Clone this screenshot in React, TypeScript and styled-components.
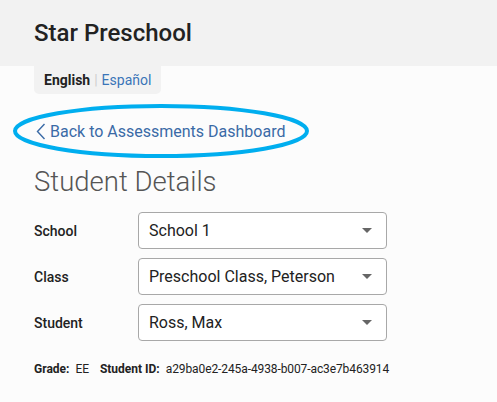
import * as React from 'react';
import styled, {createGlobalStyle} from 'styled-components';

const fields = [
    {label: 'School', value: 'School 1'},
    {label: 'Class', value: 'Preschool Class, Peterson'},
    {label: 'Student', value: 'Ross, Max'},
];

export default function App() {
    return (
        <>
            <GlobalStyle/>
            <Header>
                <Title>Star Preschool</Title>
            </Header>
            <LangTab>
                <LangCurrent>English</LangCurrent>
                <LangSep>|</LangSep>
                <LangLink href='#'>Español</LangLink>
            </LangTab>
            <Main>
                <BackWrap>
                    <BackLink href='#'>
                        <svg width='10' height='17' viewBox='0 0 10 17'>
                            <path d='M8.5 1 L1.5 8.5 L8.5 16' fill='none' stroke='currentColor' strokeWidth='1.4'/>
                        </svg>
                        Back to Assessments Dashboard
                    </BackLink>
                    <Highlight width='298' height='56' viewBox='0 0 298 56'>
                        <ellipse cx='149' cy='28' rx='146' ry='25' fill='none' stroke='#00aeef' strokeWidth='4'/>
                    </Highlight>
                </BackWrap>
                <Heading>Student Details</Heading>
                <Fields>
                    {fields.map(f => (
                        <Row key={f.label}>
                            <Label>{f.label}</Label>
                            <Select>
                                <span>{f.value}</span>
                                <Caret/>
                            </Select>
                        </Row>
                    ))}
                </Fields>
                <Meta>
                    <MetaKey>Grade:</MetaKey>
                    <MetaValue>EE</MetaValue>
                    <MetaKey>Student ID:</MetaKey>
                    <MetaValue>a29ba0e2-245a-4938-b007-ac3e7b463914</MetaValue>
                </Meta>
            </Main>
        </>
    );
}

const GlobalStyle = createGlobalStyle`
  body {
    margin: 0;
    background: #fcfcfc;
    font-family: Roboto, "Liberation Sans", sans-serif;
    color: #212121;
  }
`;

const Header = styled.header`
  height: 66px;
  background: #f2f2f2;
  display: flex;
  align-items: center;
  padding: 0 34px;
`;

const Title = styled.h1`
  margin: 0;
  font-size: 24px;
  font-weight: 500;
  color: #222;
`;

const LangTab = styled.div`
  margin-left: 34px;
  display: inline-flex;
  align-items: center;
  height: 28px;
  padding: 0 10px;
  background: #f2f2f2;
  border-radius: 0 0 5px 5px;
  font-size: 14px;
`;

const LangCurrent = styled.span`
  font-weight: 700;
  color: #222;
`;

const LangSep = styled.span`
  color: #cfcfcf;
  margin: 0 4px;
`;

const LangLink = styled.a`
  color: #3a75b8;
  text-decoration: none;
`;

const Main = styled.main`
  padding: 0 34px;
`;

const BackWrap = styled.div`
  position: relative;
  margin-top: 28px;
  height: 18px;
`;

const BackLink = styled.a`
  display: inline-flex;
  align-items: center;
  gap: 4px;
  margin-left: 2px;
  font-size: 16px;
  color: #3a6aa6;
  text-decoration: none;
`;

const Highlight = styled.svg`
  position: absolute;
  left: -22px;
  top: -19px;
  pointer-events: none;
`;

const Heading = styled.h2`
  margin: 25px 0 0;
  font-size: 27.5px;
  font-weight: 300;
  color: #555;
  line-height: 34px;
`;

const Fields = styled.div`
  margin-top: 13px;
  display: flex;
  flex-direction: column;
  gap: 9px;
`;

const Row = styled.div`
  display: flex;
  align-items: center;
`;

const Label = styled.label`
  width: 104px;
  font-size: 14px;
  font-weight: 500;
  color: #222;
`;

const Select = styled.div`
  width: 249px;
  height: 37px;
  box-sizing: border-box;
  border: 1px solid #a8a8a8;
  border-radius: 4px;
  background: #fff;
  display: flex;
  align-items: center;
  justify-content: space-between;
  padding: 0 14px 0 10px;
  font-size: 16px;
  color: #222;
`;

const Caret = styled.span`
  width: 0;
  height: 0;
  border-left: 5px solid transparent;
  border-right: 5px solid transparent;
  border-top: 5px solid #666;
`;

const Meta = styled.div`
  margin-top: 21px;
  font-size: 12px;
  color: #222;
  display: flex;
  align-items: baseline;
`;

const MetaKey = styled.span`
  font-weight: 700;
  margin-right: 6px;
`;

const MetaValue = styled.span`
  margin-right: 11px;
  letter-spacing: -0.1px;
`;
